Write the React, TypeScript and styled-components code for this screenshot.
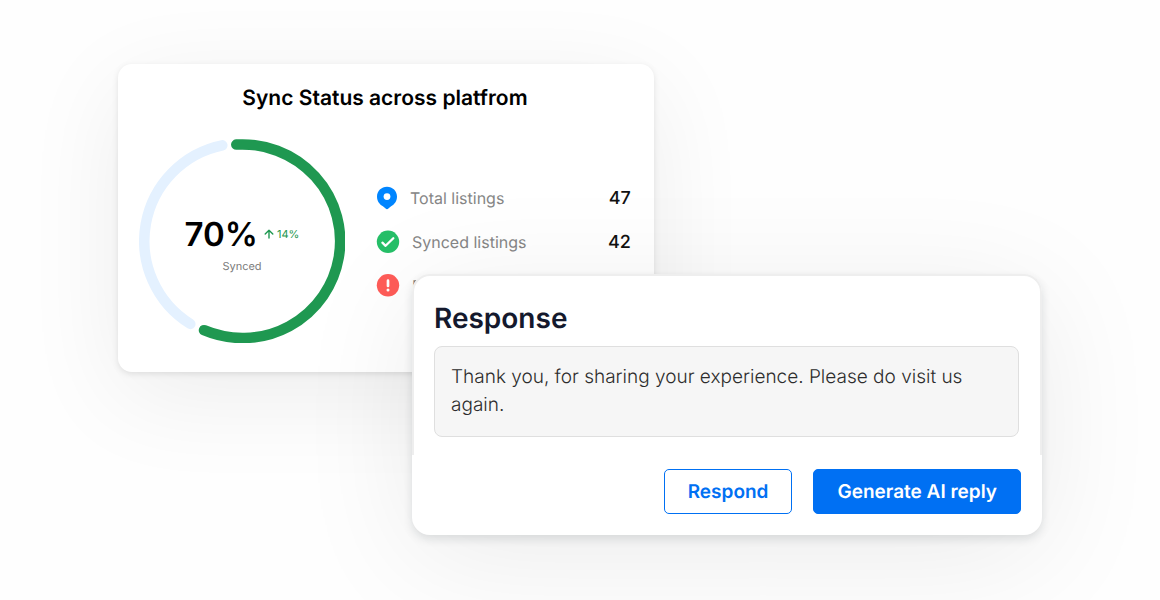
import React from "react";
import styled, { createGlobalStyle } from "styled-components";

const GlobalStyle = createGlobalStyle`
  *, *::before, *::after { box-sizing: border-box; }
  body {
    margin: 0;
    background: #fefefe;
    font-family: Inter, "Liberation Sans", sans-serif;
    text-rendering: geometricPrecision;
    -webkit-font-smoothing: antialiased;
  }
`;

const Stage = styled.main`
  display: flex;
  flex-direction: column;
  min-height: 100vh;
  padding: 64px 118px;
`;

const SyncCard = styled.section`
  width: 58%;
  min-width: 520px;
  padding: 21px 23px 29px 21px;
  border-radius: 14px;
  background: #fff;
  box-shadow: 0 2px 6px rgba(0, 0, 0, 0.1), 0 24px 100px rgba(0, 0, 0, 0.07);
`;

const SyncTitle = styled.h2`
  margin: 0 0 26px;
  font-size: 21px;
  line-height: 28px;
  font-weight: 600;
  text-align: center;
  color: #000;
`;

const SyncBody = styled.div`
  display: flex;
  align-items: center;
  gap: 31px;
`;

const Gauge = styled.div`
  display: grid;
  flex: none;
  width: 206px;

  > * {
    grid-area: 1 / 1;
  }
`;

const GaugeLabel = styled.div`
  display: flex;
  flex-direction: column;
  align-items: center;
  justify-content: center;
  gap: 2px;
  padding-top: 4px;
`;

const GaugeFigures = styled.div`
  display: flex;
  align-items: center;
  gap: 6px;
`;

const Percent = styled.strong`
  font-size: 33px;
  line-height: 44px;
  font-weight: 600;
  color: #000;
`;

const Trend = styled.span`
  display: flex;
  align-items: center;
  gap: 3px;
  font-size: 11px;
  line-height: 16px;
  color: #1f9851;
`;

const Caption = styled.span`
  font-size: 11px;
  line-height: 16px;
  color: #7b7b7b;
`;

const StatList = styled.ul`
  display: flex;
  flex: 1;
  flex-direction: column;
  gap: 20px;
  margin: 0;
  padding: 2px 0 0;
  list-style: none;
`;

const StatRow = styled.li`
  display: flex;
  align-items: center;
  height: 24px;
  gap: 12px;
`;

const StatLabel = styled.span`
  flex: 1;
  font-size: 16px;
  line-height: 24px;
  color: #868686;
`;

const StatValue = styled.span`
  padding-top: 2px;
  font-size: 18px;
  line-height: 24px;
  font-weight: 500;
  color: #111;
`;

const ResponseCard = styled.form`
  position: relative;
  align-self: flex-end;
  width: 630px;
  max-width: 100%;
  margin: -98px 0 0;
  border-radius: 18px;
  background: #fff;
  box-shadow: 0 4px 10px rgba(20, 30, 40, 0.12), 0 20px 120px rgba(0, 0, 0, 0.08);
`;

const ResponseBody = styled.div`
  display: flex;
  flex-direction: column;
  gap: 10px;
  padding: 24px 21px 18px 20px;
  border: 2px solid #eee;
  border-bottom: 0;
  border-radius: 18px 18px 0 0;
`;

const ResponseLabel = styled.label`
  font-size: 28px;
  line-height: 36px;
  font-weight: 600;
  color: #14192d;
`;

const ResponseText = styled.textarea`
  display: block;
  width: 100%;
  height: 91px;
  padding: 16px;
  border: 1px solid #dfdfdf;
  border-radius: 8px;
  outline: none;
  resize: none;
  overflow: hidden;
  background: #f6f6f6;
  font-family: inherit;
  font-size: 19px;
  line-height: 28px;
  font-weight: 300;
  text-rendering: inherit;
  color: #2c2c2c;
`;

const Actions = styled.div`
  display: flex;
  justify-content: flex-end;
  gap: 21px;
  padding: 14px 21px 21px;
`;

const ActionButton = styled.button<{ $primary?: boolean }>`
  height: 45px;
  padding: 0 23px;
  border: 1px solid #0070f3;
  border-radius: 5px;
  background: ${(p) => (p.$primary ? "#0070f3" : "#fff")};
  color: ${(p) => (p.$primary ? "#fff" : "#0070f3")};
  font-family: inherit;
  font-size: 19px;
  line-height: 24px;
  font-weight: 600;
  text-rendering: inherit;
  white-space: nowrap;
  cursor: pointer;
`;

const Ring = () => (
  <svg width="206" height="204" viewBox="0 0 206 204" fill="none" strokeWidth="10.5" strokeLinecap="round" aria-hidden="true">
    <path d="M51.3 184.9A97.7 97.7 0 0 1 83.3 6.3" stroke="#e4f1ff" />
    <path d="M97.3 5.6A97.7 96.8 0 1 1 65 191.2" stroke="#1f9851" />
  </svg>
);

const ArrowUp = () => (
  <svg width="10" height="10" viewBox="0 0 10 10" fill="none" stroke="#1f9851" strokeWidth="1.4" strokeLinecap="round" strokeLinejoin="round" aria-hidden="true">
    <path d="M5 9V1.3M1.2 5 5 1.2 8.8 5" />
  </svg>
);

const PinIcon = () => (
  <svg width="22" height="24" viewBox="0 0 22 24" aria-hidden="true">
    <path d="M11 .7C5.400 .7 1 5 1 10.400c0 4.700 2.600 7.800 5.900 9.900 1.200.8 2 1.600 2.700 2.300.9.800 1.900.8 2.800 0 .7-.7 1.500-1.500 2.700-2.300C18.400 18.200 21 15.100 21 10.400 21 5 16.600.7 11 .7Z" fill="#0085ff" />
    <circle cx="11" cy="10.600" r="3.400" fill="#fff" />
  </svg>
);

const CheckIcon = () => (
  <svg width="24" height="24" viewBox="0 0 24 24" aria-hidden="true">
    <circle cx="12" cy="11.800" r="11.200" fill="#26bf68" />
    <path d="m6.400 12.700 3.200 3.100 7.700-7.600" fill="none" stroke="#fff" strokeWidth="2.300" strokeLinecap="round" strokeLinejoin="round" />
  </svg>
);

const AlertIcon = () => (
  <svg width="24" height="24" viewBox="0 0 24 24" aria-hidden="true">
    <circle cx="12" cy="11.300" r="11.200" fill="#ff5c58" />
    <path d="M12 6.700v5.200" stroke="#fff" strokeWidth="2.700" strokeLinecap="round" />
    <circle cx="12" cy="16" r="1.500" fill="#fff" />
  </svg>
);

const stats = [
  { icon: <PinIcon />, label: "Total listings", value: "47" },
  { icon: <CheckIcon />, label: "Synced listings", value: "42" },
  { icon: <AlertIcon />, label: "Failed", value: "" },
];

export default function App() {
  return (
    <>
      <GlobalStyle />
      <Stage>
        <SyncCard>
          <SyncTitle>Sync Status across platfrom</SyncTitle>
          <SyncBody>
            <Gauge>
              <Ring />
              <GaugeLabel>
                <GaugeFigures>
                  <Percent>70%</Percent>
                  <Trend>
                    <ArrowUp />
                    14%
                  </Trend>
                </GaugeFigures>
                <Caption>Synced</Caption>
              </GaugeLabel>
            </Gauge>
            <StatList>
              {stats.map((s) => (
                <StatRow key={s.label}>
                  {s.icon}
                  <StatLabel>{s.label}</StatLabel>
                  <StatValue>{s.value}</StatValue>
                </StatRow>
              ))}
            </StatList>
          </SyncBody>
        </SyncCard>
        <ResponseCard onSubmit={(e) => e.preventDefault()}>
          <ResponseBody>
            <ResponseLabel htmlFor="response">Response</ResponseLabel>
            <ResponseText
              id="response"
              defaultValue="Thank you, for sharing your experience. Please do visit us again."
            />
          </ResponseBody>
          <Actions>
            <ActionButton type="submit">Respond</ActionButton>
            <ActionButton type="button" $primary>
              Generate AI reply
            </ActionButton>
          </Actions>
        </ResponseCard>
      </Stage>
    </>
  );
}
